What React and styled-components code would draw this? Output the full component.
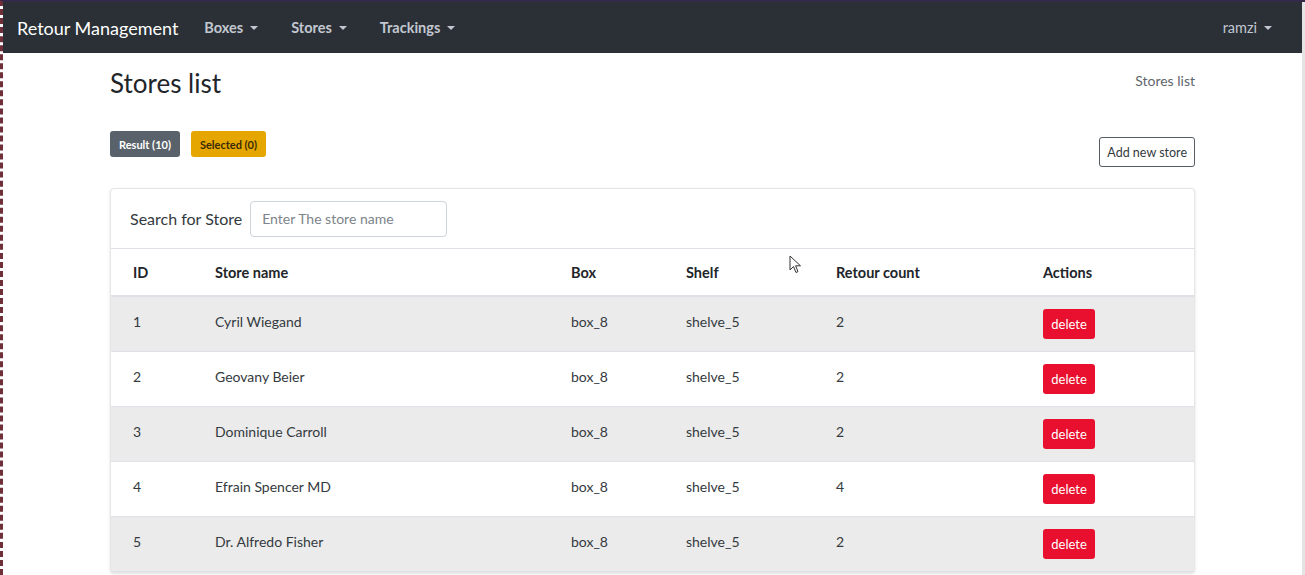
import styled, { createGlobalStyle } from "styled-components";

const GlobalStyle = createGlobalStyle`
  html, body {
    margin: 0;
    padding: 0;
    background: #ffffff;
    font-family: Lato, "Liberation Sans", sans-serif;
    color: #212529;
  }
  * { box-sizing: border-box; }
`;

const Frame = styled.div`
  position: relative;
  display: flex;
  height: 575px;
  overflow: hidden;
  border-top: 2px solid #35294a;
  border-left: 3px dashed #6e2f3a;
`;

const Main = styled.div`
  flex: 1;
  min-width: 0;
`;

const ScrollTrack = styled.div`
  width: 3px;
  background: #e4e4e4;
`;

const Navbar = styled.nav`
  display: flex;
  align-items: center;
  height: 51px;
  padding: 0 30px 0 14px;
  background: #2a3036;
`;

const Brand = styled.span`
  font-size: 18px;
  color: #ffffff;
  margin-right: 26px;
`;

const NavMenu = styled.div`
  display: flex;
  gap: 33px;
  flex: 1;
`;

const NavItem = styled.span`
  display: inline-flex;
  align-items: center;
  font-size: 14.5px;
  font-weight: ${(p) => (p.$bold ? 700 : 400)};
  color: #c2c7d0;
  &::after {
    content: "";
    margin-left: 7px;
    border-top: 4px solid #c2c7d0;
    border-left: 4px solid transparent;
    border-right: 4px solid transparent;
  }
`;

const Container = styled.div`
  width: 1085px;
  margin: 0 auto;
`;

const ContentHeader = styled.div`
  display: flex;
  justify-content: space-between;
  align-items: flex-start;
  padding-top: 15px;
`;

const Title = styled.h1`
  margin: 0;
  font-size: 26px;
  font-weight: 400;
  line-height: 31px;
  color: #212529;
`;

const Breadcrumb = styled.span`
  font-size: 14px;
  color: #5f666d;
  margin-top: 4px;
`;

const Toolbar = styled.div`
  display: flex;
  justify-content: space-between;
  align-items: flex-start;
  margin-top: 32px;
`;

const Badges = styled.div`
  display: flex;
  gap: 11px;
`;

const Badge = styled.span`
  display: inline-flex;
  align-items: center;
  height: 26px;
  padding: 0 9px;
  border-radius: 3px;
  font-size: 11px;
  font-weight: 700;
  background: ${(p) => (p.$tone === "warning" ? "#e5a600" : "#59626a")};
  color: ${(p) => (p.$tone === "warning" ? "#3a2c05" : "#ffffff")};
`;

const OutlineButton = styled.button`
  margin-top: 6px;
  height: 30px;
  padding: 0 7px;
  border: 1px solid #555b61;
  border-radius: 3px;
  background: #ffffff;
  font-family: inherit;
  font-size: 12.5px;
  color: #343a40;
`;

const Card = styled.div`
  margin-top: 21px;
  border: 1px solid #e6e6e6;
  border-radius: 4px;
  box-shadow: 0 1px 3px rgba(0, 0, 0, 0.12);
  background: #ffffff;
`;

const CardHeader = styled.div`
  display: flex;
  align-items: center;
  gap: 8px;
  height: 60px;
  padding: 0 19px;
  border-bottom: 1px solid #dee2e6;
`;

const SearchLabel = styled.label`
  font-size: 16px;
  color: #343a40;
`;

const SearchInput = styled.input`
  width: 197px;
  height: 36px;
  padding: 0 11px;
  border: 1px solid #ced4da;
  border-radius: 4px;
  font-family: inherit;
  font-size: 14px;
  color: #495057;
  &::placeholder {
    color: #7d848a;
  }
`;

const Table = styled.table`
  width: 100%;
  border-collapse: collapse;
  table-layout: fixed;
  font-size: 14px;
`;

const Body = styled.tbody`
  border-bottom: 1px solid #dee2e6;
`;

const HeadCell = styled.th`
  height: 47px;
  padding: 0 12px;
  padding-left: ${(p) => (p.$first ? "22px" : "12px")};
  text-align: left;
  font-size: 14.5px;
  font-weight: 700;
  color: #212529;
  border-bottom: 2px solid #dee2e6;
`;

const Row = styled.tr`
  background: ${(p) => (p.$striped ? "#ebebeb" : "#ffffff")};
`;

const Cell = styled.td`
  height: 55px;
  padding: 15px 12px 0;
  padding-left: ${(p) => (p.$first ? "22px" : "12px")};
  vertical-align: top;
  line-height: 20px;
  border-top: 1px solid #dee2e6;
  color: #343a40;
`;

const ActionCell = styled(Cell)`
  padding-top: 12px;
`;

const DeleteButton = styled.button`
  height: 30px;
  width: 52px;
  border: none;
  border-radius: 3px;
  background: #e8102e;
  color: #ffffff;
  font-family: inherit;
  font-size: 13px;
`;

const Cursor = styled.svg`
  position: absolute;
  left: 786px;
  top: 253px;
`;

const columns = [
  { label: "ID", width: 92 },
  { label: "Store name", width: 356 },
  { label: "Box", width: 115 },
  { label: "Shelf", width: 150 },
  { label: "Retour count", width: 207 },
  { label: "Actions", width: 163 },
];

const stores = [
  { id: 1, name: "Cyril Wiegand", count: 2 },
  { id: 2, name: "Geovany Beier", count: 2 },
  { id: 3, name: "Dominique Carroll", count: 2 },
  { id: 4, name: "Efrain Spencer MD", count: 4 },
  { id: 5, name: "Dr. Alfredo Fisher", count: 2 },
];

export default function App() {
  return (
    <>
      <GlobalStyle />
      <Frame>
        <Main>
          <Navbar>
            <Brand>Retour Management</Brand>
            <NavMenu>
              <NavItem $bold>Boxes</NavItem>
              <NavItem $bold>Stores</NavItem>
              <NavItem $bold>Trackings</NavItem>
            </NavMenu>
            <NavItem>ramzi</NavItem>
          </Navbar>
          <Container>
            <ContentHeader>
              <Title>Stores list</Title>
              <Breadcrumb>Stores list</Breadcrumb>
            </ContentHeader>
            <Toolbar>
              <Badges>
                <Badge>Result (10)</Badge>
                <Badge $tone="warning">Selected (0)</Badge>
              </Badges>
              <OutlineButton>Add new store</OutlineButton>
            </Toolbar>
            <Card>
              <CardHeader>
                <SearchLabel>Search for Store</SearchLabel>
                <SearchInput placeholder="Enter The store name" />
              </CardHeader>
              <Table>
                <colgroup>
                  {columns.map((c) => (
                    <col key={c.label} style={{ width: c.width }} />
                  ))}
                </colgroup>
                <thead>
                  <tr>
                    {columns.map((c, i) => (
                      <HeadCell key={c.label} $first={i === 0}>
                        {c.label}
                      </HeadCell>
                    ))}
                  </tr>
                </thead>
                <Body>
                  {stores.map((s, i) => (
                    <Row key={s.id} $striped={i % 2 === 0}>
                      <Cell $first>{s.id}</Cell>
                      <Cell>{s.name}</Cell>
                      <Cell>box_8</Cell>
                      <Cell>shelve_5</Cell>
                      <Cell>{s.count}</Cell>
                      <ActionCell>
                        <DeleteButton>delete</DeleteButton>
                      </ActionCell>
                    </Row>
                  ))}
                </Body>
              </Table>
            </Card>
          </Container>
        </Main>
        <ScrollTrack />
        <Cursor width="14" height="20" viewBox="0 0 14 20">
          <path
            d="M1 1 L1 15 L4.5 11.5 L7 17.5 L9 16.6 L6.6 10.8 L11.5 10.8 Z"
            fill="#ffffff"
            stroke="#333"
            strokeWidth="1"
            strokeLinejoin="round"
          />
        </Cursor>
      </Frame>
    </>
  );
}
